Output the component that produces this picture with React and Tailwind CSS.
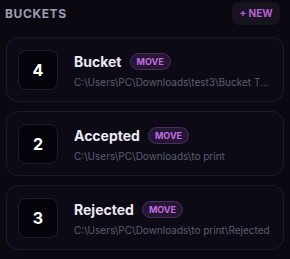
export default function App() {
  const buckets = [
    { n: "4", name: "Bucket", path: "C:\\Users\\PC\\Downloads\\test3\\Bucket T..." },
    { n: "2", name: "Accepted", path: "C:\\Users\\PC\\Downloads\\to print" },
    { n: "3", name: "Rejected", path: "C:\\Users\\PC\\Downloads\\to print\\Rejected" },
  ];
  return (
    <div
      className="w-[290px] h-[259px] bg-[#0a0911] overflow-hidden px-[6px] pt-[2px]"
      style={{ fontFamily: "Inter, 'Liberation Sans', sans-serif" }}
    >
      <div className="flex items-center justify-between h-[23px] pr-[4px]">
        <div className="text-[12px] font-bold tracking-[0.6px] text-[#a39bb6] -ml-[1px]">BUCKETS</div>
        <div className="h-[23px] w-[48px] rounded-[7px] bg-[#17131f] flex items-center justify-center text-[10px] font-bold text-[#b661d3]">
          + NEW
        </div>
      </div>
      <div className="mt-[12px] flex flex-col gap-[9px] w-[278px]">
        {buckets.map((b) => (
          <div
            key={b.name}
            className="h-[65px] rounded-[12px] border border-[#1d1b29] bg-[#0c0b15] flex items-center pl-[11px]"
          >
            <div className="w-[40px] h-[40px] rounded-[8px] border border-[#1f1d2a] bg-[#05040a] flex items-center justify-center text-[16px] font-bold text-white shrink-0">
              {b.n}
            </div>
            <div className="ml-[16px] flex flex-col min-w-0 mt-[2px]">
              <div className="flex items-center gap-[8px]">
                <div className="text-[14px] font-bold text-[#ebe9f2] leading-[18px]">{b.name}</div>
                <div className="h-[17px] px-[6px] rounded-full border border-[#4b2c5d] bg-[#251633] flex items-center text-[9px] font-bold text-[#c06de0]">
                  MOVE
                </div>
              </div>
              <div className="mt-[5px] text-[10px] text-[#5e5b6d] whitespace-nowrap leading-[13px]">{b.path}</div>
            </div>
          </div>
        ))}
      </div>
    </div>
  );
}
